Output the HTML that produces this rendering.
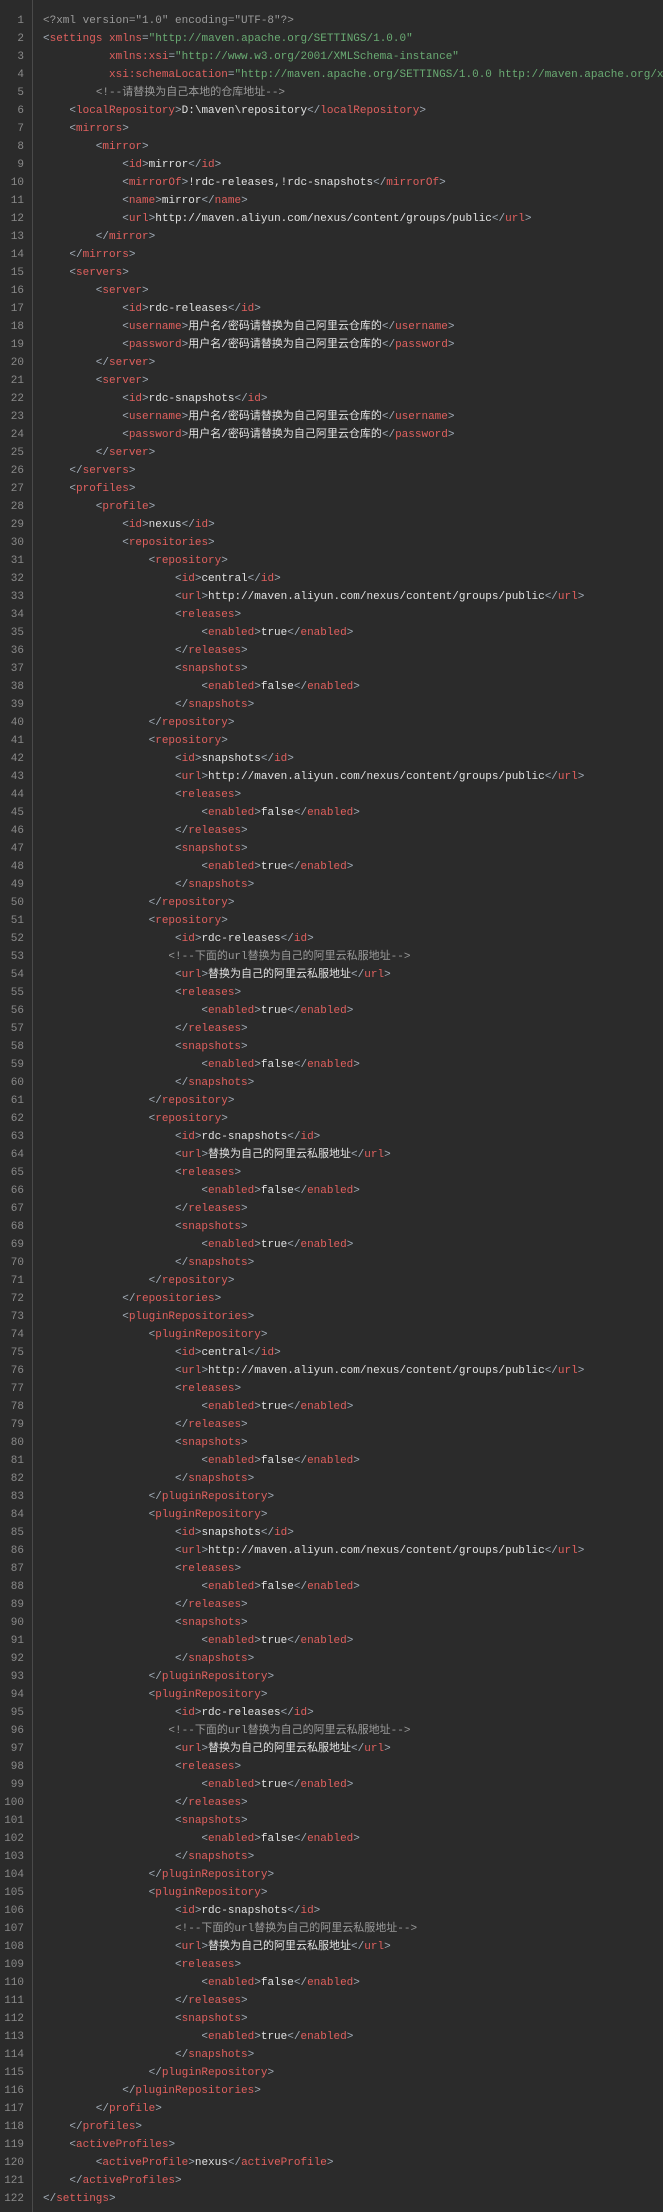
<!DOCTYPE html>
<html><head><meta charset="utf-8">
<style>
html,body{margin:0;padding:0;background:#2b2b2b;width:663px;height:2212px;overflow:hidden}
.g{position:absolute;left:0;top:0;width:32px;height:2212px;border-right:1px solid #4a4a4a}
pre{margin:0;position:absolute;top:12px;font-family:"Liberation Mono","Noto Sans CJK SC",monospace;font-size:11px;line-height:18px;white-space:pre}
.n{left:0;width:24px;text-align:right;color:#8a8a8a}
.c{left:43px;width:620px;overflow:hidden;color:#a3adb8}
.r{color:#e0605e}
.s{color:#6aab73}
.w{color:#e2e2e2}
.m{color:#9a9a9a}
</style></head><body>
<div class="g"></div>
<pre class="n">1
2
3
4
5
6
7
8
9
10
11
12
13
14
15
16
17
18
19
20
21
22
23
24
25
26
27
28
29
30
31
32
33
34
35
36
37
38
39
40
41
42
43
44
45
46
47
48
49
50
51
52
53
54
55
56
57
58
59
60
61
62
63
64
65
66
67
68
69
70
71
72
73
74
75
76
77
78
79
80
81
82
83
84
85
86
87
88
89
90
91
92
93
94
95
96
97
98
99
100
101
102
103
104
105
106
107
108
109
110
111
112
113
114
115
116
117
118
119
120
121
122</pre>
<pre class="c"><span class="m">&lt;?xml version="1.0" encoding="UTF-8"?&gt;</span>
&lt;<span class="r">settings</span> <span class="r">xmlns</span>=<span class="s">"http://maven.apache.org/SETTINGS/1.0.0"</span>
          <span class="r">xmlns:xsi</span>=<span class="s">"http://www.w3.org/2001/XMLSchema-instance"</span>
          <span class="r">xsi:schemaLocation</span>=<span class="s">"http://maven.apache.org/SETTINGS/1.0.0 http://maven.apache.org/x</span>
        <span class="m">&lt;!--请替换为自己本地的仓库地址--&gt;</span>
    &lt;<span class="r">localRepository</span>&gt;<span class="w">D:\maven\repository</span>&lt;/<span class="r">localRepository</span>&gt;
    &lt;<span class="r">mirrors</span>&gt;
        &lt;<span class="r">mirror</span>&gt;
            &lt;<span class="r">id</span>&gt;<span class="w">mirror</span>&lt;/<span class="r">id</span>&gt;
            &lt;<span class="r">mirrorOf</span>&gt;<span class="w">!rdc-releases,!rdc-snapshots</span>&lt;/<span class="r">mirrorOf</span>&gt;
            &lt;<span class="r">name</span>&gt;<span class="w">mirror</span>&lt;/<span class="r">name</span>&gt;
            &lt;<span class="r">url</span>&gt;<span class="w">http://maven.aliyun.com/nexus/content/groups/public</span>&lt;/<span class="r">url</span>&gt;
        &lt;/<span class="r">mirror</span>&gt;
    &lt;/<span class="r">mirrors</span>&gt;
    &lt;<span class="r">servers</span>&gt;
        &lt;<span class="r">server</span>&gt;
            &lt;<span class="r">id</span>&gt;<span class="w">rdc-releases</span>&lt;/<span class="r">id</span>&gt;
            &lt;<span class="r">username</span>&gt;<span class="w">用户名/密码请替换为自己阿里云仓库的</span>&lt;/<span class="r">username</span>&gt;
            &lt;<span class="r">password</span>&gt;<span class="w">用户名/密码请替换为自己阿里云仓库的</span>&lt;/<span class="r">password</span>&gt;
        &lt;/<span class="r">server</span>&gt;
        &lt;<span class="r">server</span>&gt;
            &lt;<span class="r">id</span>&gt;<span class="w">rdc-snapshots</span>&lt;/<span class="r">id</span>&gt;
            &lt;<span class="r">username</span>&gt;<span class="w">用户名/密码请替换为自己阿里云仓库的</span>&lt;/<span class="r">username</span>&gt;
            &lt;<span class="r">password</span>&gt;<span class="w">用户名/密码请替换为自己阿里云仓库的</span>&lt;/<span class="r">password</span>&gt;
        &lt;/<span class="r">server</span>&gt;
    &lt;/<span class="r">servers</span>&gt;
    &lt;<span class="r">profiles</span>&gt;
        &lt;<span class="r">profile</span>&gt;
            &lt;<span class="r">id</span>&gt;<span class="w">nexus</span>&lt;/<span class="r">id</span>&gt;
            &lt;<span class="r">repositories</span>&gt;
                &lt;<span class="r">repository</span>&gt;
                    &lt;<span class="r">id</span>&gt;<span class="w">central</span>&lt;/<span class="r">id</span>&gt;
                    &lt;<span class="r">url</span>&gt;<span class="w">http://maven.aliyun.com/nexus/content/groups/public</span>&lt;/<span class="r">url</span>&gt;
                    &lt;<span class="r">releases</span>&gt;
                        &lt;<span class="r">enabled</span>&gt;<span class="w">true</span>&lt;/<span class="r">enabled</span>&gt;
                    &lt;/<span class="r">releases</span>&gt;
                    &lt;<span class="r">snapshots</span>&gt;
                        &lt;<span class="r">enabled</span>&gt;<span class="w">false</span>&lt;/<span class="r">enabled</span>&gt;
                    &lt;/<span class="r">snapshots</span>&gt;
                &lt;/<span class="r">repository</span>&gt;
                &lt;<span class="r">repository</span>&gt;
                    &lt;<span class="r">id</span>&gt;<span class="w">snapshots</span>&lt;/<span class="r">id</span>&gt;
                    &lt;<span class="r">url</span>&gt;<span class="w">http://maven.aliyun.com/nexus/content/groups/public</span>&lt;/<span class="r">url</span>&gt;
                    &lt;<span class="r">releases</span>&gt;
                        &lt;<span class="r">enabled</span>&gt;<span class="w">false</span>&lt;/<span class="r">enabled</span>&gt;
                    &lt;/<span class="r">releases</span>&gt;
                    &lt;<span class="r">snapshots</span>&gt;
                        &lt;<span class="r">enabled</span>&gt;<span class="w">true</span>&lt;/<span class="r">enabled</span>&gt;
                    &lt;/<span class="r">snapshots</span>&gt;
                &lt;/<span class="r">repository</span>&gt;
                &lt;<span class="r">repository</span>&gt;
                    &lt;<span class="r">id</span>&gt;<span class="w">rdc-releases</span>&lt;/<span class="r">id</span>&gt;
                   <span class="m">&lt;!--下面的url替换为自己的阿里云私服地址--&gt;</span>
                    &lt;<span class="r">url</span>&gt;<span class="w">替换为自己的阿里云私服地址</span>&lt;/<span class="r">url</span>&gt;
                    &lt;<span class="r">releases</span>&gt;
                        &lt;<span class="r">enabled</span>&gt;<span class="w">true</span>&lt;/<span class="r">enabled</span>&gt;
                    &lt;/<span class="r">releases</span>&gt;
                    &lt;<span class="r">snapshots</span>&gt;
                        &lt;<span class="r">enabled</span>&gt;<span class="w">false</span>&lt;/<span class="r">enabled</span>&gt;
                    &lt;/<span class="r">snapshots</span>&gt;
                &lt;/<span class="r">repository</span>&gt;
                &lt;<span class="r">repository</span>&gt;
                    &lt;<span class="r">id</span>&gt;<span class="w">rdc-snapshots</span>&lt;/<span class="r">id</span>&gt;
                    &lt;<span class="r">url</span>&gt;<span class="w">替换为自己的阿里云私服地址</span>&lt;/<span class="r">url</span>&gt;
                    &lt;<span class="r">releases</span>&gt;
                        &lt;<span class="r">enabled</span>&gt;<span class="w">false</span>&lt;/<span class="r">enabled</span>&gt;
                    &lt;/<span class="r">releases</span>&gt;
                    &lt;<span class="r">snapshots</span>&gt;
                        &lt;<span class="r">enabled</span>&gt;<span class="w">true</span>&lt;/<span class="r">enabled</span>&gt;
                    &lt;/<span class="r">snapshots</span>&gt;
                &lt;/<span class="r">repository</span>&gt;
            &lt;/<span class="r">repositories</span>&gt;
            &lt;<span class="r">pluginRepositories</span>&gt;
                &lt;<span class="r">pluginRepository</span>&gt;
                    &lt;<span class="r">id</span>&gt;<span class="w">central</span>&lt;/<span class="r">id</span>&gt;
                    &lt;<span class="r">url</span>&gt;<span class="w">http://maven.aliyun.com/nexus/content/groups/public</span>&lt;/<span class="r">url</span>&gt;
                    &lt;<span class="r">releases</span>&gt;
                        &lt;<span class="r">enabled</span>&gt;<span class="w">true</span>&lt;/<span class="r">enabled</span>&gt;
                    &lt;/<span class="r">releases</span>&gt;
                    &lt;<span class="r">snapshots</span>&gt;
                        &lt;<span class="r">enabled</span>&gt;<span class="w">false</span>&lt;/<span class="r">enabled</span>&gt;
                    &lt;/<span class="r">snapshots</span>&gt;
                &lt;/<span class="r">pluginRepository</span>&gt;
                &lt;<span class="r">pluginRepository</span>&gt;
                    &lt;<span class="r">id</span>&gt;<span class="w">snapshots</span>&lt;/<span class="r">id</span>&gt;
                    &lt;<span class="r">url</span>&gt;<span class="w">http://maven.aliyun.com/nexus/content/groups/public</span>&lt;/<span class="r">url</span>&gt;
                    &lt;<span class="r">releases</span>&gt;
                        &lt;<span class="r">enabled</span>&gt;<span class="w">false</span>&lt;/<span class="r">enabled</span>&gt;
                    &lt;/<span class="r">releases</span>&gt;
                    &lt;<span class="r">snapshots</span>&gt;
                        &lt;<span class="r">enabled</span>&gt;<span class="w">true</span>&lt;/<span class="r">enabled</span>&gt;
                    &lt;/<span class="r">snapshots</span>&gt;
                &lt;/<span class="r">pluginRepository</span>&gt;
                &lt;<span class="r">pluginRepository</span>&gt;
                    &lt;<span class="r">id</span>&gt;<span class="w">rdc-releases</span>&lt;/<span class="r">id</span>&gt;
                   <span class="m">&lt;!--下面的url替换为自己的阿里云私服地址--&gt;</span>
                    &lt;<span class="r">url</span>&gt;<span class="w">替换为自己的阿里云私服地址</span>&lt;/<span class="r">url</span>&gt;
                    &lt;<span class="r">releases</span>&gt;
                        &lt;<span class="r">enabled</span>&gt;<span class="w">true</span>&lt;/<span class="r">enabled</span>&gt;
                    &lt;/<span class="r">releases</span>&gt;
                    &lt;<span class="r">snapshots</span>&gt;
                        &lt;<span class="r">enabled</span>&gt;<span class="w">false</span>&lt;/<span class="r">enabled</span>&gt;
                    &lt;/<span class="r">snapshots</span>&gt;
                &lt;/<span class="r">pluginRepository</span>&gt;
                &lt;<span class="r">pluginRepository</span>&gt;
                    &lt;<span class="r">id</span>&gt;<span class="w">rdc-snapshots</span>&lt;/<span class="r">id</span>&gt;
                    <span class="m">&lt;!--下面的url替换为自己的阿里云私服地址--&gt;</span>
                    &lt;<span class="r">url</span>&gt;<span class="w">替换为自己的阿里云私服地址</span>&lt;/<span class="r">url</span>&gt;
                    &lt;<span class="r">releases</span>&gt;
                        &lt;<span class="r">enabled</span>&gt;<span class="w">false</span>&lt;/<span class="r">enabled</span>&gt;
                    &lt;/<span class="r">releases</span>&gt;
                    &lt;<span class="r">snapshots</span>&gt;
                        &lt;<span class="r">enabled</span>&gt;<span class="w">true</span>&lt;/<span class="r">enabled</span>&gt;
                    &lt;/<span class="r">snapshots</span>&gt;
                &lt;/<span class="r">pluginRepository</span>&gt;
            &lt;/<span class="r">pluginRepositories</span>&gt;
        &lt;/<span class="r">profile</span>&gt;
    &lt;/<span class="r">profiles</span>&gt;
    &lt;<span class="r">activeProfiles</span>&gt;
        &lt;<span class="r">activeProfile</span>&gt;<span class="w">nexus</span>&lt;/<span class="r">activeProfile</span>&gt;
    &lt;/<span class="r">activeProfiles</span>&gt;
&lt;/<span class="r">settings</span>&gt;</pre>
</body></html>
